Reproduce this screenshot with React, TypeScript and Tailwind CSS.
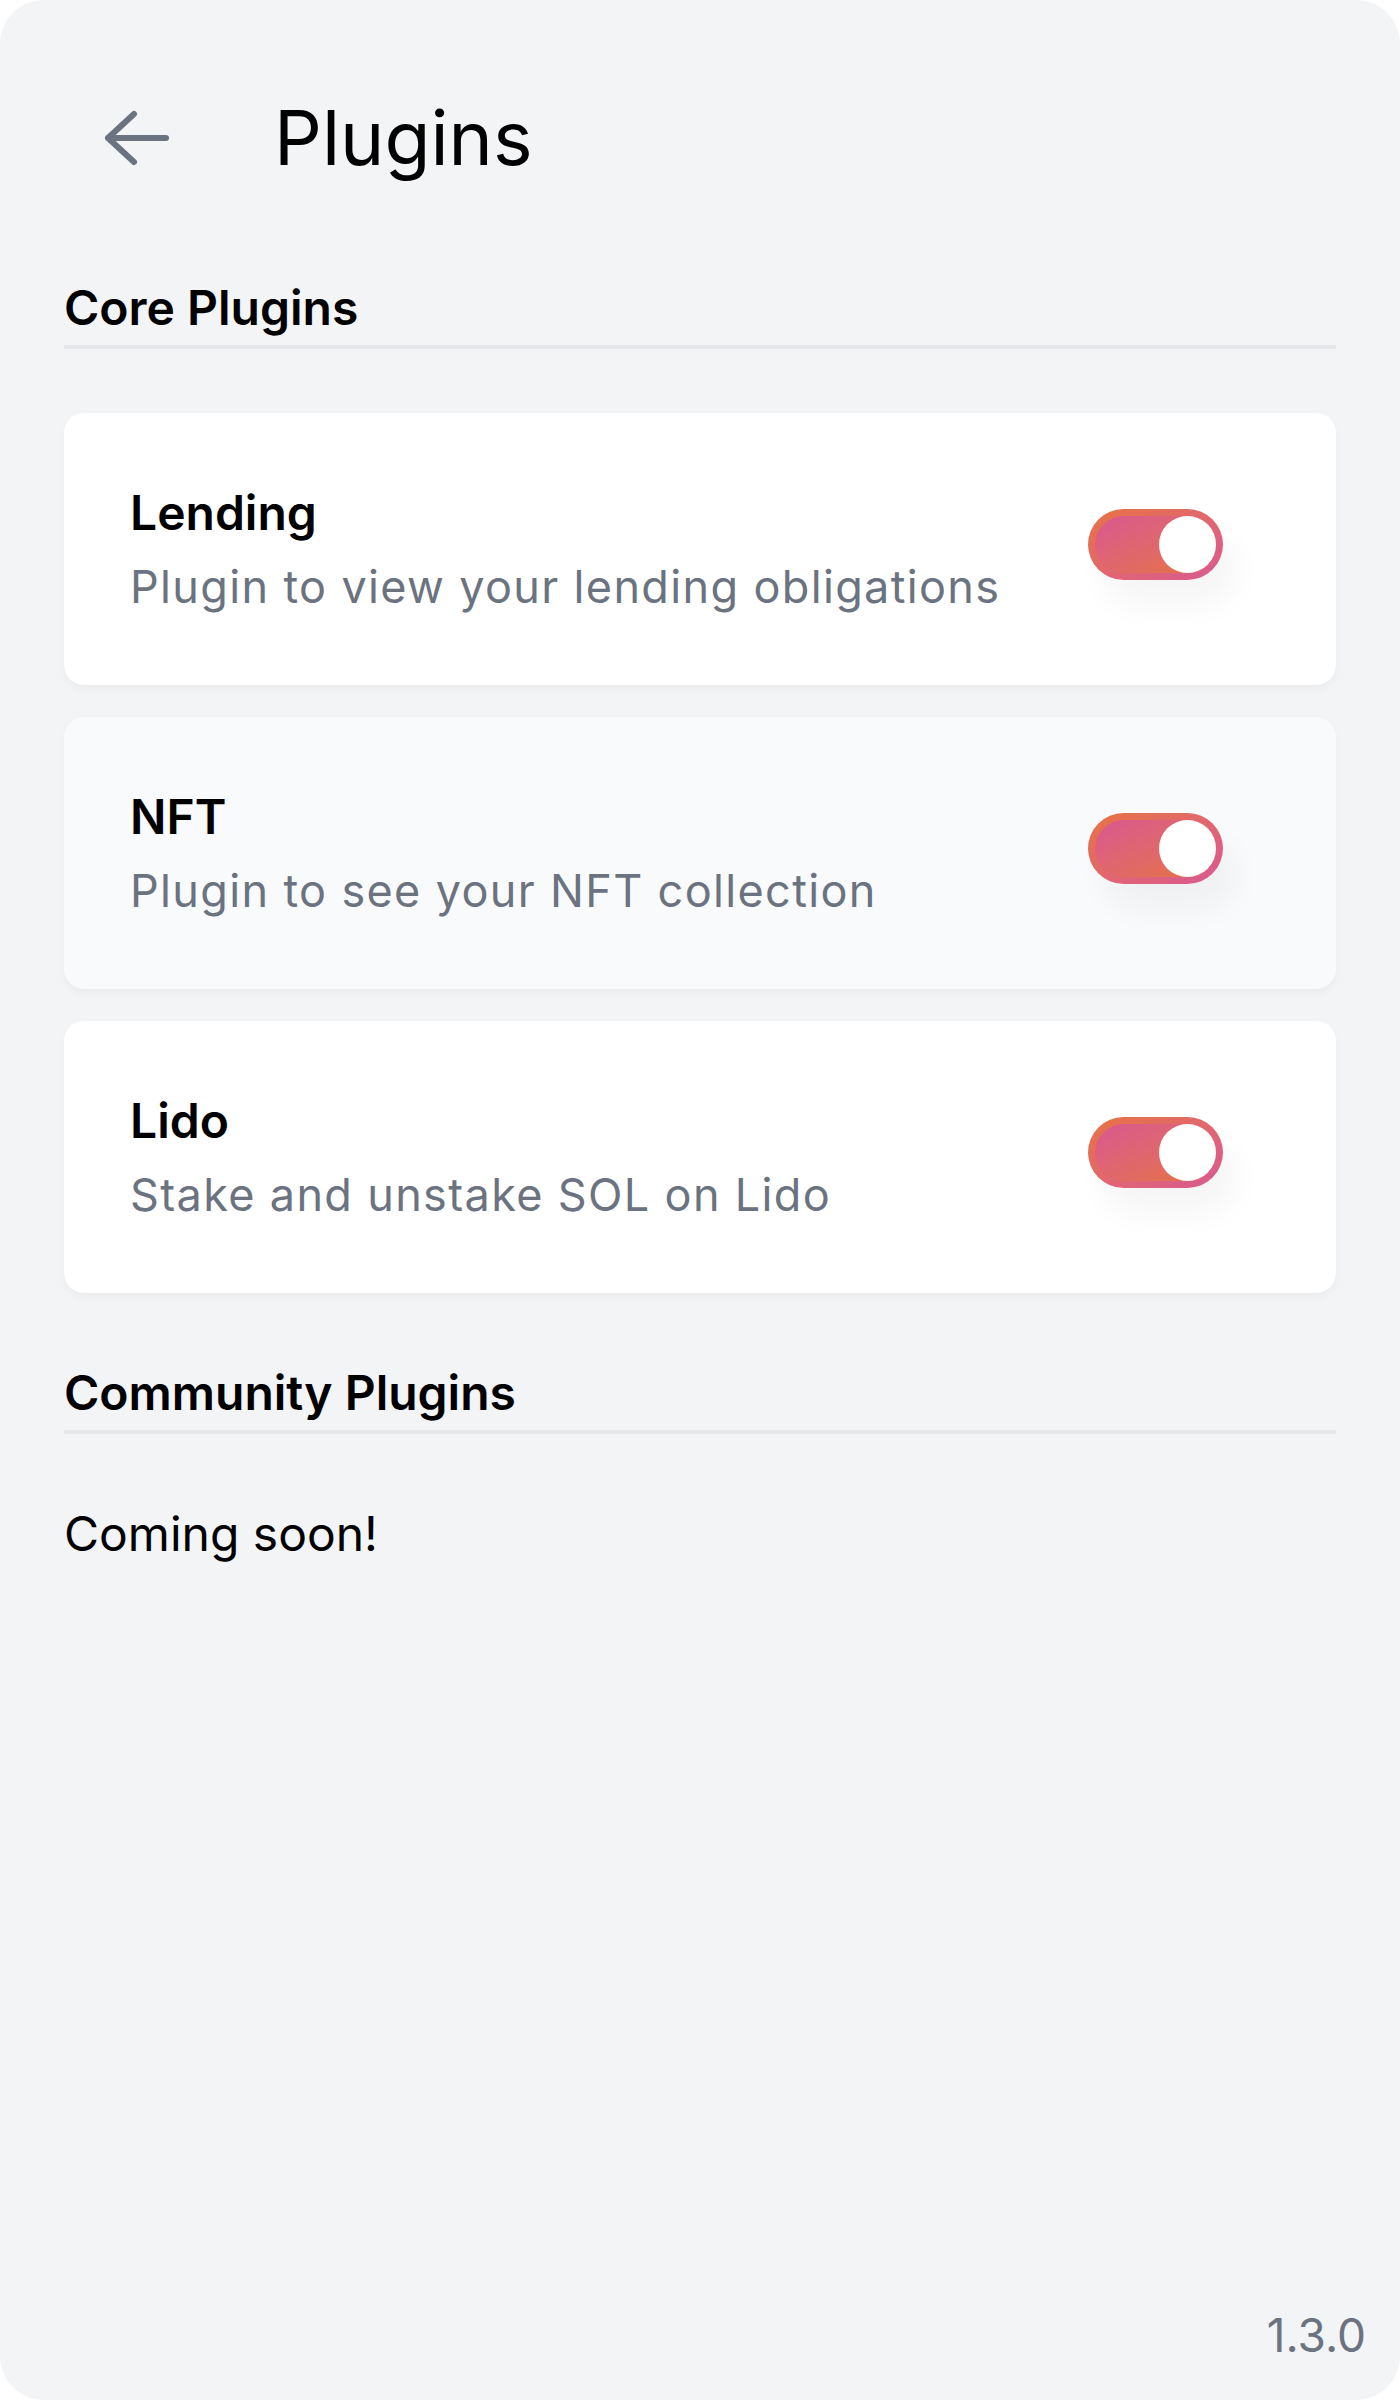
import { useState } from "react";

type Plugin = {
  id: string;
  name: string;
  description: string;
};

const corePlugins: Plugin[] = [
  { id: "lending", name: "Lending", description: "Plugin to view your lending obligations" },
  { id: "nft", name: "NFT", description: "Plugin to see your NFT collection" },
  { id: "lido", name: "Lido", description: "Stake and unstake SOL on Lido" },
];

function Toggle({ on, onChange }: { on: boolean; onChange: () => void }) {
  return (
    <button
      onClick={onChange}
      className="relative mb-[9px] h-[71px] w-[135px] shrink-0 rounded-full bg-gradient-to-br from-[#e8733b] to-[#da5892] p-[7px] shadow-[14px_26px_30px_rgba(0,0,0,0.04)]"
    >
      <div className="flex h-full w-full rounded-full bg-gradient-to-br from-[#d9578f] to-[#e8733b]">
        <div
          className={`h-[57px] w-[57px] rounded-full bg-white ${on ? "ml-auto" : ""}`}
        />
      </div>
    </button>
  );
}

function SectionTitle({ children }: { children: string }) {
  return (
    <h2 className="border-b-4 border-[#e5e7eb] pb-[13px] text-[48px] font-semibold leading-none text-black">
      {children}
    </h2>
  );
}

export default function App() {
  const [enabled, setEnabled] = useState<Record<string, boolean>>({
    lending: true,
    nft: true,
    lido: true,
  });

  return (
    <div className="bg-white font-['Inter','Noto_Sans',sans-serif]">
      <div className="flex min-h-[2400px] flex-col rounded-[44px] bg-[#f3f4f6]">
        {/* Header */}
        <div className="flex items-center gap-[104px] pl-[103px] pt-[100px]">
          <button className="text-[#6b7280]">
            <svg width="67" height="56" viewBox="0 0 67 56" fill="none">
              <path
                d="M31 4 L5 28 L31 52 M5 28 H63"
                stroke="currentColor"
                strokeWidth="6"
                strokeLinecap="round"
                strokeLinejoin="round"
              />
            </svg>
          </button>
          <h1 className="text-[75px] font-normal leading-none text-black">Plugins</h1>
        </div>

        <div className="px-[64px]">
          {/* Core plugins */}
          <div className="mt-[109px]">
            <SectionTitle>Core Plugins</SectionTitle>
          </div>

          <div className="mt-[64px] flex flex-col gap-[32px]">
            {corePlugins.map((p, i) => (
              <div
                key={p.id}
                className={`flex h-[272px] items-center justify-between rounded-[20px] pl-[66px] pr-[113px] shadow-[0_4px_10px_rgba(0,0,0,0.04)] ${
                  i === 1 ? "bg-[#f9fafb]" : "bg-white"
                }`}
              >
                <div className="flex flex-col gap-[27px]">
                  <div className="text-[48px] font-semibold leading-none text-black">{p.name}</div>
                  <div className="text-[45px] leading-none tracking-[0.03em] text-[#6b7280]">
                    {p.description}
                  </div>
                </div>
                <Toggle
                  on={enabled[p.id]}
                  onChange={() => setEnabled((s) => ({ ...s, [p.id]: !s[p.id] }))}
                />
              </div>
            ))}
          </div>

          {/* Community plugins */}
          <div className="mt-[76px]">
            <SectionTitle>Community Plugins</SectionTitle>
          </div>
          <p className="mt-[76px] text-[48px] leading-none text-black">Coming soon!</p>
        </div>

        <div className="mt-auto self-end pb-[42px] pr-[34px] text-[46px] leading-none text-[#6b7280]">
          1.3.0
        </div>
      </div>
    </div>
  );
}
